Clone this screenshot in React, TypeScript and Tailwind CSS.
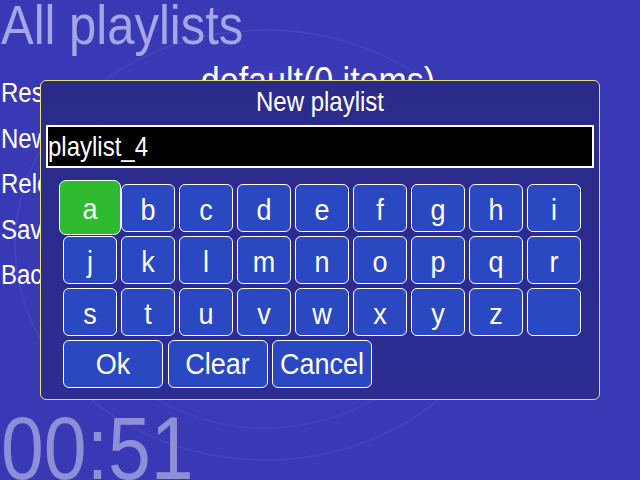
import React from "react";

const FONT = { fontFamily: '"Liberation Sans", Arial, sans-serif' };

function T({ children, className = "" }: { children: React.ReactNode; className?: string }) {
  return <span className={"inline-block whitespace-pre " + className}>{children}</span>;
}

const rows = [
  ["a", "b", "c", "d", "e", "f", "g", "h", "i"],
  ["j", "k", "l", "m", "n", "o", "p", "q", "r"],
  ["s", "t", "u", "v", "w", "x", "y", "z", ""],
];

export default function App() {
  return (
    <div
      className="relative w-[640px] h-[480px] overflow-hidden bg-[#3939b6] flex flex-col"
      style={FONT}
    >
      <svg className="absolute inset-0" width="640" height="480" viewBox="0 0 640 480">
        <defs>
          <radialGradient id="g" cx="270" cy="250" r="260" gradientUnits="userSpaceOnUse">
            <stop offset="0" stopColor="#4646c2" stopOpacity="0.5" />
            <stop offset="1" stopColor="#3939b6" stopOpacity="0" />
          </radialGradient>
        </defs>
        <rect width="640" height="480" fill="url(#g)" />
        <ellipse cx="265" cy="245" rx="250" ry="215" fill="none" stroke="#5656cc" strokeOpacity="0.35" strokeWidth="2" />
        <ellipse cx="265" cy="250" rx="200" ry="178" fill="none" stroke="#5656cc" strokeOpacity="0.28" strokeWidth="2" />
      </svg>

      {/* heading */}
      <div className="relative pt-[1px] pl-[1px] text-[49px] leading-[49px] text-[#a6a6e6]">
        <T className="scale-y-[1.15]">All playlists</T>
      </div>

      {/* list area */}
      <div className="relative grid">
        <div className="col-start-1 row-start-1 mt-[13px] text-center text-[34px] leading-[34px] text-white">
          <T className="scale-y-[1.15] translate-x-[-2px]">default(0 items)</T>
        </div>
        <div className="col-start-1 row-start-1 mt-[31px] pl-[1px] flex flex-col gap-[21.5px] text-[24px] leading-[24px] text-white">
          <T className="scale-y-[1.15]">Resume</T>
          <T className="scale-y-[1.15]">New</T>
          <T className="scale-y-[1.15]">Reload</T>
          <T className="scale-y-[1.15]">Save</T>
          <T className="scale-y-[1.15]">Back</T>
        </div>
      </div>

      {/* timer */}
      <div className="relative mt-auto -mb-[7px] pl-[1px] text-[77px] leading-[77px] text-[#8f8fd8]">
        <T className="scale-y-[1.15]">00:51</T>
      </div>

      {/* dialog */}
      <div className="absolute left-[40px] top-[80px] w-[560px] h-[320px] border border-[#e4e46e] rounded-[6px] bg-gradient-to-b from-[#2b2b8c] to-[#2c2c92] flex flex-col">
        <div className="mt-[9px] text-center text-[24px] leading-[24px] text-white">
          <T className="scale-y-[1.16]">New playlist</T>
        </div>
        <div className="mt-[11px] ml-[5px] w-[548px] h-[43px] border-2 border-white bg-black flex items-center text-[24px] leading-[24px] text-white">
          <T className="scale-y-[1.16]">playlist_4</T>
        </div>
        <div className="mt-[16px] ml-[22px] grid grid-cols-[repeat(9,54px)] auto-rows-[48px] gap-[4px]">
          {rows.flat().map((k, i) =>
            i === 0 ? (
              <div
                key={i}
                className="relative z-10 -mx-[4px] -mt-[4px] -mb-[3px] rounded-[7px] border border-white bg-[#2fbb2f] flex items-center justify-center pt-[3px] text-[27px] leading-[27px] text-white"
              >
                <T className="scale-y-[1.1]">{k}</T>
              </div>
            ) : (
              <div
                key={i}
                className="rounded-[6px] border border-white bg-[#2a48c2] flex items-center justify-center pt-[4px] text-[27px] leading-[27px] text-white"
              >
                <T className="scale-y-[1.1]">{k}</T>
              </div>
            )
          )}
        </div>
        <div className="mt-[4px] ml-[22px] flex gap-[4.5px]">
          {["Ok", "Clear", "Cancel"].map((b) => (
            <div
              key={b}
              className="w-[100px] h-[48px] rounded-[6px] border border-white bg-[#2a48c2] flex items-center justify-center text-[27px] leading-[27px] text-white"
            >
              <T className="scale-y-[1.1]">{b}</T>
            </div>
          ))}
        </div>
      </div>
    </div>
  );
}
